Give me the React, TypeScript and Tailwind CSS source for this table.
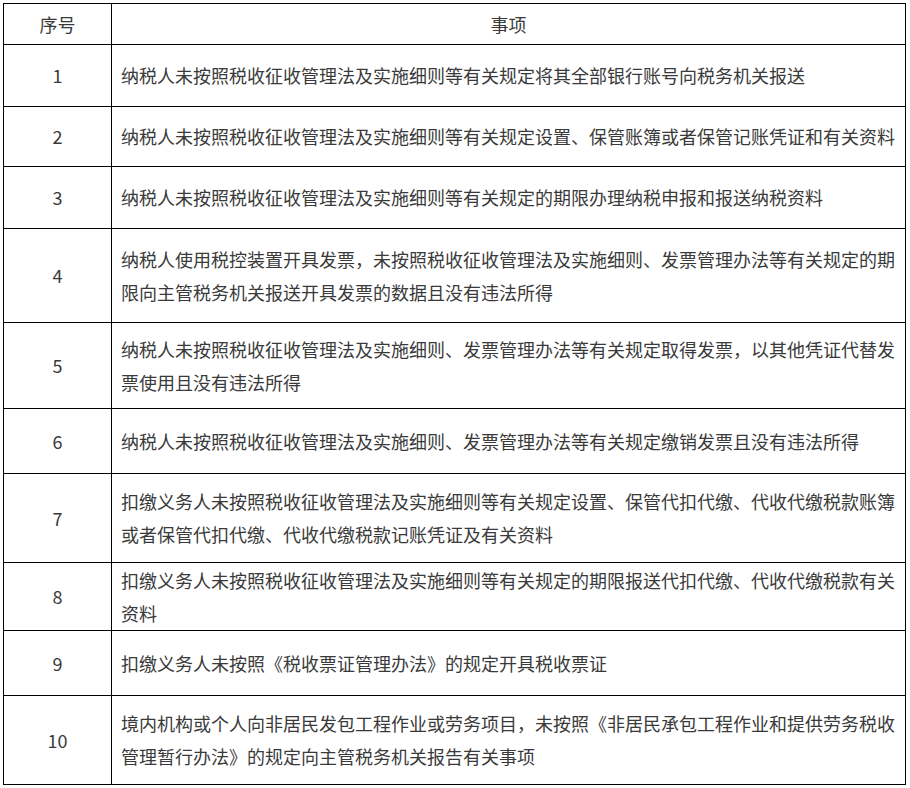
const rows: { no: string; text: string; h: string }[] = [
  { no: '1', text: '纳税人未按照税收征收管理法及实施细则等有关规定将其全部银行账号向税务机关报送', h: 'h-[62px]' },
  { no: '2', text: '纳税人未按照税收征收管理法及实施细则等有关规定设置、保管账簿或者保管记账凭证和有关资料', h: 'h-[60px]' },
  { no: '3', text: '纳税人未按照税收征收管理法及实施细则等有关规定的期限办理纳税申报和报送纳税资料', h: 'h-[62px]' },
  { no: '4', text: '纳税人使用税控装置开具发票，未按照税收征收管理法及实施细则、发票管理办法等有关规定的期限向主管税务机关报送开具发票的数据且没有违法所得', h: 'h-[94px]' },
  { no: '5', text: '纳税人未按照税收征收管理法及实施细则、发票管理办法等有关规定取得发票，以其他凭证代替发票使用且没有违法所得', h: 'h-[86px]' },
  { no: '6', text: '纳税人未按照税收征收管理法及实施细则、发票管理办法等有关规定缴销发票且没有违法所得', h: 'h-[65px]' },
  { no: '7', text: '扣缴义务人未按照税收征收管理法及实施细则等有关规定设置、保管代扣代缴、代收代缴税款账簿或者保管代扣代缴、代收代缴税款记账凭证及有关资料', h: 'h-[89px]' },
  { no: '8', text: '扣缴义务人未按照税收征收管理法及实施细则等有关规定的期限报送代扣代缴、代收代缴税款有关资料', h: 'h-[68px]' },
  { no: '9', text: '扣缴义务人未按照《税收票证管理办法》的规定开具税收票证', h: 'h-[65px]' },
  { no: '10', text: '境内机构或个人向非居民发包工程作业或劳务项目，未按照《非居民承包工程作业和提供劳务税收管理暂行办法》的规定向主管税务机关报告有关事项', h: 'h-[89px]' },
]

export default function App() {
  return (
    <div className="min-h-screen bg-white pt-[3px] pl-[3px]">
      <table
        className="w-[903px] table-fixed border-collapse text-[18px] leading-[33px] text-[#3a3a3a]"
        style={{ fontFamily: '"Noto Sans CJK SC", "Noto Sans", sans-serif' }}
      >
        <colgroup>
          <col className="w-[108px]" />
          <col />
        </colgroup>
        <thead>
          <tr className="h-[41px]">
            <th className="border border-black text-center font-normal">序号</th>
            <th className="border border-black text-center font-normal">事项</th>
          </tr>
        </thead>
        <tbody>
          {rows.map((r) => (
            <tr key={r.no} className={r.h}>
              <td className="border border-black text-center align-middle">{r.no}</td>
              <td className="border border-black px-[9px] align-middle">{r.text}</td>
            </tr>
          ))}
        </tbody>
      </table>
    </div>
  )
}
